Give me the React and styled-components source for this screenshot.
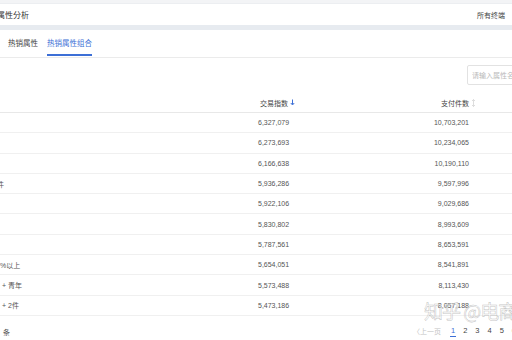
import React from 'react'
import styled, { createGlobalStyle } from 'styled-components'

const rows = [
  { label: '', trade: '6,327,079', pay: '10,703,201' },
  { label: '', trade: '6,273,693', pay: '10,234,065' },
  { label: '', trade: '6,166,638', pay: '10,190,110' },
  { label: '件', trade: '5,936,286', pay: '9,597,996', shift: -3 },
  { label: '', trade: '5,922,106', pay: '9,029,686' },
  { label: '', trade: '5,830,802', pay: '8,993,609' },
  { label: '', trade: '5,787,561', pay: '8,653,591' },
  { label: '%以上', trade: '5,654,051', pay: '8,541,891' },
  { label: '+ 青年', trade: '5,573,488', pay: '8,113,430', shift: 2 },
  { label: '+ 2件', trade: '5,473,186', pay: '8,057,188', shift: 2 },
]

function SortDown() {
  return (
    <svg width="5" height="7" viewBox="0 0 5 7">
      <path d="M2.5 0.5 V5.5 M0.8 4 L2.5 6 L4.2 4" stroke="#3d6fd6" strokeWidth="1" fill="none" />
    </svg>
  )
}

function SortBoth() {
  return (
    <svg width="5" height="8" viewBox="0 0 5 8">
      <path d="M2.5 0.5 V7.5 M1 2 L2.5 0.5 L4 2 M1 6 L2.5 7.5 L4 6" stroke="#d4d4d4" strokeWidth="0.8" fill="none" />
    </svg>
  )
}

function App() {
  return (
    <>
      <GlobalStyle />
      <Page>
        <TopStrip />
        <Header>
          <Title>属性分析</Title>
          <HeaderRight>所有终端</HeaderRight>
        </Header>
        <Band />
        <Tabs>
          <Tab>热销属性</Tab>
          <Tab active>热销属性组合</Tab>
        </Tabs>
        <Toolbar>
          <Search placeholder="请输入属性名称" />
        </Toolbar>
        <Table>
          <HeadRow>
            <Cell />
            <HeadCell>交易指数 <SortDown /></HeadCell>
            <HeadCell right>支付件数 <SortBoth /></HeadCell>
            <Cell />
          </HeadRow>
          {rows.map((r, i) => (
            <Row key={i}>
              <LabelCell style={{ marginLeft: r.shift || 0 }}>{r.label}</LabelCell>
              <Cell>{r.trade}</Cell>
              <Cell right>{r.pay}</Cell>
              <Cell />
            </Row>
          ))}
        </Table>
        <Footer>
          <Total>条</Total>
          <Pager>
            <PrevBtn>〈上一页</PrevBtn>
            <PageNum active>1</PageNum>
            <PageNum>2</PageNum>
            <PageNum>3</PageNum>
            <PageNum>4</PageNum>
            <PageNum>5</PageNum>
            <PageNum>6</PageNum>
          </Pager>
        </Footer>
        <Watermark>知乎 @电商</Watermark>
      </Page>
    </>
  )
}

export default App

const GlobalStyle = createGlobalStyle`
  body{
    margin:0;
    background:#fff;
    font-family: "Liberation Sans", "Noto Sans CJK SC", sans-serif;
  }
`

const Page = styled.div`
  position: relative;
  width: 512px;
  height: 340px;
  overflow: hidden;
  background: #fff;
`

const TopStrip = styled.div`
  height: 3px;
  background: #f3f4f6;
  border-bottom: 1px solid #eceef1;
`

const Header = styled.div`
  height: 21px;
  display: flex;
  align-items: center;
  justify-content: space-between;
  white-space: nowrap;
`

const Title = styled.span`
  margin-left: -3px;
  font-size: 8px;
  color: #333;
`

const HeaderRight = styled.span`
  font-size: 7px;
  color: #444;
  margin-right: -15px;
  width: 50px;
`

const Band = styled.div`
  height: 5px;
  background: #e7ebf0;
`

const Tabs = styled.div`
  height: 27px;
  display: flex;
  align-items: stretch;
  gap: 9px;
  padding-left: 8px;
  border-bottom: 1px solid #ebebeb;
`

const Tab = styled.div`
  display: flex;
  align-items: center;
  font-size: 7.5px;
  color: ${p => (p.active ? '#3d6fd6' : '#444')};
  border-bottom: 2px solid ${p => (p.active ? '#3d6fd6' : 'transparent')};
  padding-top: 1px;
  margin-bottom: 1px;
`

const Toolbar = styled.div`
  height: 35px;
  display: flex;
  justify-content: flex-end;
  align-items: flex-start;
  padding-top: 7px;
  box-sizing: border-box;
`

const Search = styled.input`
  width: 70px;
  height: 20px;
  margin-right: -25px;
  box-sizing: border-box;
  border: 1px solid #e2e2e2;
  border-radius: 2px;
  padding: 0 4px;
  font-size: 7px;
  font-family: inherit;
  outline: none;
  &::placeholder{
    color: #b9b9b9;
  }
`

const Table = styled.div`
  display: flex;
  flex-direction: column;
`

const Row = styled.div`
  display: grid;
  grid-template-columns: 258px 142px 78px 34px;
  height: 20.3px;
  align-items: center;
  border-bottom: 1px solid #f0f0f0;
  box-sizing: border-box;
  font-size: 7px;
  color: #555;
`

const HeadRow = styled(Row)`
  height: 20px;
  color: #444;
  border-bottom-color: #e8e8e8;
`

const Cell = styled.div`
  display: flex;
  align-items: center;
  justify-content: ${p => (p.right ? 'flex-end' : 'flex-start')};
  padding-right: ${p => (p.right ? '9px' : '0')};
  white-space: nowrap;
`

const HeadCell = styled(Cell)`
  gap: 2px;
  padding-left: ${p => (p.right ? '0' : '2px')};
  padding-right: ${p => (p.right ? '2px' : '0')};
`

const LabelCell = styled(Cell)`
  color: #555;
`

const Footer = styled.div`
  height: 24px;
  display: flex;
  align-items: flex-end;
  justify-content: space-between;
  padding-bottom: 3px;
  box-sizing: border-box;
  font-size: 7px;
  white-space: nowrap;
`

const Total = styled.span`
  padding-left: 3px;
  color: #555;
`

const Pager = styled.div`
  display: flex;
  align-items: center;
  gap: 6px;
  margin-right: -5px;
`

const PrevBtn = styled.span`
  color: #c4c4c4;
  margin-right: 3px;
`

const PageNum = styled.span`
  font-size: 7.5px;
  color: ${p => (p.active ? '#3d6fd6' : '#444')};
  border-bottom: 1.5px solid ${p => (p.active ? '#3d6fd6' : 'transparent')};
  padding: 0 1px 1px;
`

const Watermark = styled.div`
  position: absolute;
  left: 424px;
  top: 297px;
  font-size: 19px;
  font-family: "Noto Sans CJK SC", sans-serif;
  white-space: nowrap;
  letter-spacing: -1px;
  color: rgba(255, 255, 255, 0.5);
  -webkit-text-stroke: 0.5px rgba(150, 150, 150, 0.6);
  pointer-events: none;
`
